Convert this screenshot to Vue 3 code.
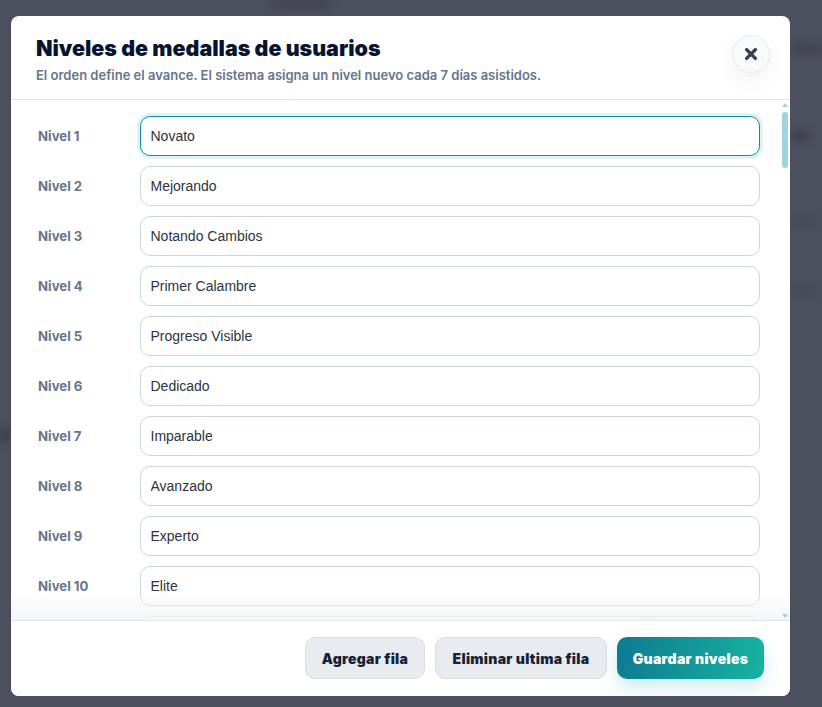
<script setup>
const levels = ['Novato','Mejorando','Notando Cambios','Primer Calambre','Progreso Visible','Dedicado','Imparable','Avanzado','Experto','Elite']
</script>

<template>
  <div class="screen">
    <i class="blob b1"></i><i class="blob b2"></i><i class="blob b3"></i><i class="blob b4"></i><i class="blob b5"></i><i class="blob b6"></i>
    <section class="modal">
      <header class="head">
        <div>
          <h1>Niveles de medallas de usuarios</h1>
          <p>El orden define el avance. El sistema asigna un nivel nuevo cada 7 días asistidos.</p>
        </div>
        <button class="close" aria-label="Cerrar">
          <svg width="14" height="14" viewBox="0 0 14 14"><path d="M2.6 2.6 11.4 11.4M11.4 2.6 2.6 11.4" stroke="#374151" stroke-width="3.4" stroke-linecap="round" fill="none"/></svg>
        </button>
      </header>
      <div class="body">
        <div class="rows">
          <div v-for="(name, i) in levels" :key="name" class="row">
            <span class="lab">Nivel {{ i + 1 }}</span>
            <input :class="{ focus: i === 0 }" :value="name" />
          </div>
          <div class="row">
            <span class="lab"></span>
            <input />
          </div>
        </div>
        <div class="fade"></div>
        <div class="bar">
          <i class="up"></i>
          <i class="thumb"></i>
          <i class="down"></i>
        </div>
      </div>
      <footer class="foot">
        <button class="btn add">Agregar fila</button>
        <button class="btn del">Eliminar ultima fila</button>
        <button class="btn primary">Guardar niveles</button>
      </footer>
    </section>
  </div>
</template>

<style>
html, body { margin: 0; background: #4b4e5c; }
</style>

<style scoped>
.screen {
  position: relative;
  width: 822px;
  height: 707px;
  overflow: hidden;
  background: #4c4f5d;
  padding: 16px 0 0 11px;
  box-sizing: border-box;
  font-family: Inter, "Liberation Sans", sans-serif;
}
.blob { position: absolute; background: #3a3d4a; filter: blur(5px); border-radius: 4px; }
.b1 { left: 272px; top: 0; width: 58px; height: 6px; }
.b2 { left: 790px; top: 46px; width: 32px; height: 6px; }
.b3 { left: 790px; top: 132px; width: 20px; height: 8px; }
.b4 { left: 0; top: 430px; width: 11px; height: 10px; background: #333644; }
.b5 { left: 790px; top: 218px; width: 24px; height: 6px; background: #434653; }
.b6 { left: 790px; top: 288px; width: 24px; height: 6px; background: #434653; }
.modal {
  position: relative;
  width: 779px;
  height: 680px;
  display: flex;
  flex-direction: column;
  background: #fff;
  border-radius: 8px;
  overflow: hidden;
}
.head {
  height: 84px;
  box-sizing: border-box;
  flex: none;
  padding: 19px 20px 0 25px;
  display: flex;
  justify-content: space-between;
  align-items: flex-start;
  border-bottom: 1px solid #e3e7ea;
}
h1 {
  margin: 0;
  font-size: 21.45px;
  line-height: 26px;
  font-weight: 900;
  color: #081530;
}
p {
  margin: 6px 0 0;
  font-size: 13px;
  line-height: 17px;
  font-weight: 600;
  color: #66758a;
}
.close {
  width: 38px;
  height: 38px;
  padding: 0;
  border: 1px solid #e5e9ec;
  border-radius: 50%;
  background: #f8fafb;
  display: flex;
  align-items: center;
  justify-content: center;
  box-shadow: 0 8px 20px rgba(15, 23, 42, .06);
}
.body { position: relative; flex: 1; overflow: hidden; }
.rows { padding: 16px 30px 0 27px; display: flex; flex-direction: column; gap: 10px; }
.row { display: flex; align-items: center; height: 40px; flex: none; }
.lab { width: 102px; flex: none; font-size: 13.2px; font-weight: 700; color: #66758a; }
input {
  width: 620px;
  height: 40px;
  box-sizing: border-box;
  padding: 0 9.5px;
  border: 1px solid #ccd6da;
  border-radius: 10px;
  background: #fff;
  color: #2b3440;
  font-family: "Liberation Sans", Arial, sans-serif;
  font-size: 14px;
  outline: none;
}
input.focus { border-color: #0f8ea3; box-shadow: 0 0 0 3px #dff2f6; }
.fade {
  position: absolute;
  left: 0; right: 0; bottom: 0;
  height: 32px;
  background: linear-gradient(to bottom, rgba(243, 244, 246, 0), rgba(243, 244, 246, .85));
  pointer-events: none;
}
.bar { position: absolute; right: 2px; top: 0; bottom: 0; width: 6px; }
.up, .down, .thumb { position: absolute; display: block; }
.up { top: 3px; left: 0; border: 3px solid transparent; border-top: 0; border-bottom: 4px solid #9fd3e0; }
.down { bottom: 2px; left: 0; border: 3px solid transparent; border-bottom: 0; border-top: 4px solid #9fd3e0; }
.thumb { top: 12px; left: 0; width: 6px; height: 56px; border-radius: 3px; background: #9fd3e0; }
.foot {
  height: 76px;
  box-sizing: border-box;
  flex: none;
  padding: 16px 26px 0 0;
  display: flex;
  justify-content: flex-end;
  align-items: flex-start;
  gap: 10px;
  border-top: 1px solid #e3e7ea;
  background: #fff;
}
.btn {
  height: 42px;
  padding: 0;
  border: 1px solid #dadee3;
  border-radius: 10px;
  background: #e8ebef;
  color: #16213a;
  font-family: Inter, "Liberation Sans", sans-serif;
  font-size: 14px;
  font-weight: 900;
  letter-spacing: .3px;
}
.add { width: 120px; }
.del { width: 172px; }
.primary {
  width: 147px;
  border: 0;
  color: #fff;
  background: linear-gradient(100deg, #0f7a92, #17b3a0);
  box-shadow: 0 8px 18px rgba(20, 170, 180, .22);
}
</style>
